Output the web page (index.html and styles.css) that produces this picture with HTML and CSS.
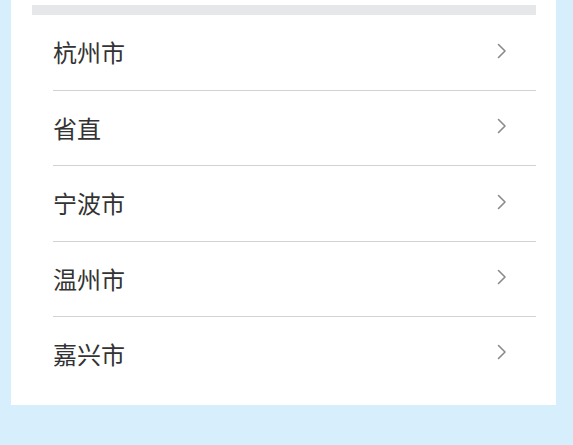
FILE: index.html
```html
<!DOCTYPE html>
<html lang="zh-CN">
<head>
  <meta charset="UTF-8">
  <meta name="viewport" content="width=device-width, initial-scale=1">
  <title>地区选择</title>
  <link rel="stylesheet" href="styles.css">
</head>
<body>
  <section class="card">
    <div class="card-bar"></div>
    <ul class="region-list">
      <li class="region-item">
        <span class="region-name">杭州市</span>
        <svg class="chevron" viewBox="0 0 10 16" width="10" height="16"><polyline points="1.5,1.5 8,8 1.5,14.5"/></svg>
      </li>
      <li class="region-item">
        <span class="region-name">省直</span>
        <svg class="chevron" viewBox="0 0 10 16" width="10" height="16"><polyline points="1.5,1.5 8,8 1.5,14.5"/></svg>
      </li>
      <li class="region-item">
        <span class="region-name">宁波市</span>
        <svg class="chevron" viewBox="0 0 10 16" width="10" height="16"><polyline points="1.5,1.5 8,8 1.5,14.5"/></svg>
      </li>
      <li class="region-item">
        <span class="region-name">温州市</span>
        <svg class="chevron" viewBox="0 0 10 16" width="10" height="16"><polyline points="1.5,1.5 8,8 1.5,14.5"/></svg>
      </li>
      <li class="region-item">
        <span class="region-name">嘉兴市</span>
        <svg class="chevron" viewBox="0 0 10 16" width="10" height="16"><polyline points="1.5,1.5 8,8 1.5,14.5"/></svg>
      </li>
    </ul>
  </section>
</body>
</html>
```

FILE: styles.css
```css
* {
  margin: 0;
  padding: 0;
  box-sizing: border-box;
}

body {
  background-color: #d7eefc;
  font-family: 'Noto Sans CJK SC', 'Noto Sans', sans-serif;
  height: 445px;
  overflow: hidden;
}

.card {
  margin-left: 11px;
  width: 545px;
  background-color: #fff;
  padding: 5px 20px 15px 21px;
}

.card-bar {
  height: 10px;
  background-color: #e6e7e9;
}

.region-list {
  list-style: none;
  padding-left: 21px;
}

.region-item {
  height: 75.5px;
  display: flex;
  align-items: center;
  justify-content: space-between;
  padding-right: 29px;
  border-bottom: 1px solid #d2d2d2;
}

.region-item:last-child {
  border-bottom: none;
  height: 73px;
}

.region-name {
  font-size: 24px;
  color: #333;
  line-height: 1;
}

.chevron {
  fill: none;
  stroke: #8a8a8a;
  stroke-width: 1.6;
  stroke-linecap: round;
  stroke-linejoin: round;
  margin-top: -3px;
}
```
